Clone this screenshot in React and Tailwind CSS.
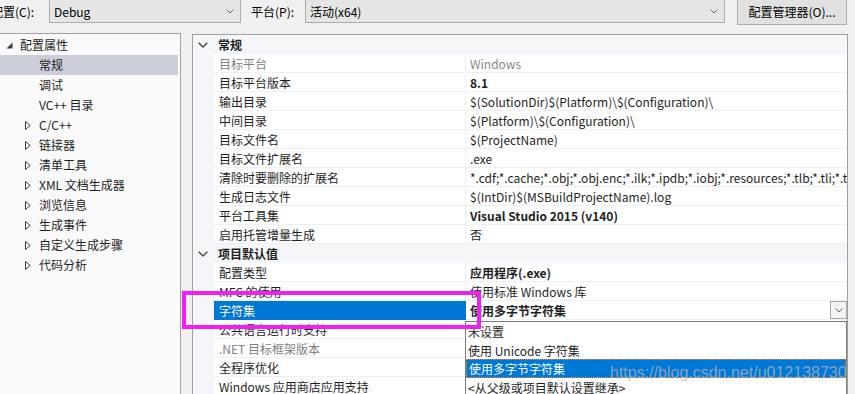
import React from "react";

const general = [
  { n: "目标平台", v: "Windows", gray: true },
  { n: "目标平台版本", v: "8.1", bold: true },
  { n: "输出目录", v: "$(SolutionDir)$(Platform)\\$(Configuration)\\" },
  { n: "中间目录", v: "$(Platform)\\$(Configuration)\\" },
  { n: "目标文件名", v: "$(ProjectName)" },
  { n: "目标文件扩展名", v: ".exe" },
  {
    n: "清除时要删除的扩展名",
    v: "*.cdf;*.cache;*.obj;*.obj.enc;*.ilk;*.ipdb;*.iobj;*.resources;*.tlb;*.tli;*.tlh;*.tmp;*.rsp;*.pgc;*.pgd;*.meta;*.tlog;*.manifest;*.res;*.pch;*.exp;*.idb;*.rep;*.xdc;*.pdb",
  },
  { n: "生成日志文件", v: "$(IntDir)$(MSBuildProjectName).log" },
  { n: "平台工具集", v: "Visual Studio 2015 (v140)", bold: true },
  { n: "启用托管增量生成", v: "否" },
];

const defaults = [
  { n: "配置类型", v: "应用程序(.exe)", bold: true },
  { n: "MFC 的使用", v: "使用标准 Windows 库" },
  { n: "字符集", v: "使用多字节字符集", bold: true, selected: true },
  { n: "公共语言运行时支持", v: "" },
  { n: ".NET 目标框架版本", v: "", grayName: true },
  { n: "全程序优化", v: "" },
  { n: "Windows 应用商店应用支持", v: "" },
];

const tree = [
  { t: "配置属性", level: 0, open: true },
  { t: "常规", level: 1, sel: true },
  { t: "调试", level: 1 },
  { t: "VC++ 目录", level: 1 },
  { t: "C/C++", level: 1, kids: true },
  { t: "链接器", level: 1, kids: true },
  { t: "清单工具", level: 1, kids: true },
  { t: "XML 文档生成器", level: 1, kids: true },
  { t: "浏览信息", level: 1, kids: true },
  { t: "生成事件", level: 1, kids: true },
  { t: "自定义生成步骤", level: 1, kids: true },
  { t: "代码分析", level: 1, kids: true },
];

function SmallChevron() {
  return (
    <svg width="8" height="5" viewBox="0 0 8 5" className="text-[#606060]">
      <path d="M0.5 0.5 L4 4 L7.5 0.5" fill="none" stroke="currentColor" strokeWidth="1" />
    </svg>
  );
}

function GroupChevron() {
  return (
    <svg width="10" height="6" viewBox="0 0 10 6" className="text-[#454545]">
      <path d="M0.7 0.7 L5 5 L9.3 0.7" fill="none" stroke="currentColor" strokeWidth="1.4" />
    </svg>
  );
}

function TreeRow({ item }) {
  return (
    <div
      className={
        "flex items-center h-[20px] w-[178px] shrink-0 " + (item.sel ? "bg-[#cccedb]" : "")
      }
    >
      {item.level === 0 ? (
        <div className="w-[20px] flex items-center pl-[6px]">
          <svg width="7" height="7" viewBox="0 0 7 7">
            <polygon points="6.5,0.5 6.5,6.5 0.5,6.5" fill="#3c3c3c" />
          </svg>
        </div>
      ) : (
        <div className="w-[39px] flex items-center pl-[25px]">
          {item.kids ? (
            <svg width="6" height="9" viewBox="0 0 6 9">
              <polygon points="0.5,0.5 5.2,4.5 0.5,8.5" fill="none" stroke="#3c3c3c" strokeWidth="1" />
            </svg>
          ) : null}
        </div>
      )}
      <span className="whitespace-nowrap">{item.t}</span>
    </div>
  );
}

function GroupHeader({ title }) {
  return (
    <div className="flex items-center h-[19px] shrink-0 bg-[#f4f6fa]">
      <div className="w-[25px] pl-[5px] flex items-center">
        <GroupChevron />
      </div>
      <span className="font-bold pt-[1px]">{title}</span>
    </div>
  );
}

function PropRow({ p }) {
  return (
    <div className="flex h-[19px] shrink-0">
      <div className="w-[21px] bg-[#f4f6fa]" />
      <div
        className={
          "w-[252px] flex items-center pl-[5px] pt-[1px] border-b border-r whitespace-nowrap overflow-hidden " +
          (p.selected
            ? "bg-[#0078d7] text-white border-[#0078d7]"
            : "bg-white border-[#eff0f3] " + (p.gray || p.grayName ? "text-[#808080]" : ""))
        }
      >
        {p.n}
      </div>
      <div className="flex-1 flex items-center border-b border-[#eff0f3] bg-white overflow-hidden">
        <span
          className={
            "pl-[4px] pt-[1px] whitespace-nowrap flex-1 overflow-hidden " +
            (p.bold ? "font-bold " : "") +
            (p.gray ? "text-[#8a8a8a]" : "")
          }
        >
          {p.v}
        </span>
        {p.selected ? (
          <div className="w-[17px] h-[18px] border border-[#a9a9a9] bg-[#f3f3f3] flex items-center justify-center shrink-0">
            <SmallChevron />
          </div>
        ) : null}
      </div>
    </div>
  );
}

export default function App() {
  return (
    <div className="relative w-[855px] h-[394px] overflow-hidden bg-[#f0f0f0] text-[12px] text-[#1e1e1e] font-['Noto_Sans_CJK_SC',sans-serif]">
      {/* top bar */}
      <div className="flex items-start h-[33px] text-black">
        <div className="-ml-[9px] w-[58px] h-[24px] flex items-center whitespace-nowrap">配置(C):</div>
        <div className="w-[192px] h-[24px] -mt-[1px] border border-[#acacac] bg-[#e5e5e5] flex items-center justify-between pl-[4px] pr-[6px]">
          <span className="pt-[1px]">Debug</span>
          <SmallChevron />
        </div>
        <div className="ml-[10px] w-[54px] h-[24px] flex items-center whitespace-nowrap">平台(P):</div>
        <div className="w-[420px] h-[24px] -mt-[1px] border border-[#acacac] bg-[#e5e5e5] flex items-center justify-between pl-[4px] pr-[6px]">
          <span className="pt-[1px]">活动(x64)</span>
          <SmallChevron />
        </div>
        <div className="ml-[12px] w-[110px] h-[26px] -mt-[1px] border border-[#adadad] bg-[#e1e1e1] flex items-center justify-center whitespace-nowrap">
          配置管理器(O)...
        </div>
      </div>

      {/* main */}
      <div className="flex items-start">
        <div className="w-[181px] h-[361px] border-t border-r border-[#a0a0a0] bg-[#fafafa] pt-[1px] flex flex-col overflow-hidden">
          {tree.map((it) => (
            <TreeRow key={it.t} item={it} />
          ))}
        </div>
        <div className="ml-[11px] mt-[1px] w-[656px] h-[360px] border-t border-l border-r border-[#a0a0a0] bg-white flex flex-col overflow-hidden">
          <GroupHeader title="常规" />
          {general.map((p) => (
            <PropRow key={p.n} p={p} />
          ))}
          <GroupHeader title="项目默认值" />
          {defaults.map((p) => (
            <PropRow key={p.n} p={p} />
          ))}
        </div>
      </div>

      {/* dropdown list */}
      <div className="absolute left-[465px] top-[321px] w-[382px] h-[80px] border border-[#7a7a7a] bg-white flex flex-col">
        <div className="h-[19px] shrink-0 flex items-center pl-[2px] pt-[1px] whitespace-nowrap">未设置</div>
        <div className="h-[18px] shrink-0 flex items-center pl-[2px] pt-[1px] whitespace-nowrap">使用 Unicode 字符集</div>
        <div className="h-[19px] shrink-0 flex items-center pl-[2px] pt-[1px] whitespace-nowrap bg-[#0078d7] text-white border border-dotted border-[#ff8728]">
          使用多字节字符集
        </div>
        <div className="h-[19px] shrink-0 flex items-center pl-[2px] pt-[1px] whitespace-nowrap">&lt;从父级或项目默认设置继承&gt;</div>
      </div>

      {/* highlight rectangle */}
      <div className="absolute left-[182px] top-[291px] w-[299px] h-[38px] border-[4px] border-[#f21ff2]" />

      {/* watermark */}
      <div className="absolute left-[610px] top-[361px] text-[16px] font-['Liberation_Sans',Arial,sans-serif] text-[rgba(182,182,182,0.75)] whitespace-nowrap">
        https://blog.csdn.net/u012138730
      </div>
    </div>
  );
}
